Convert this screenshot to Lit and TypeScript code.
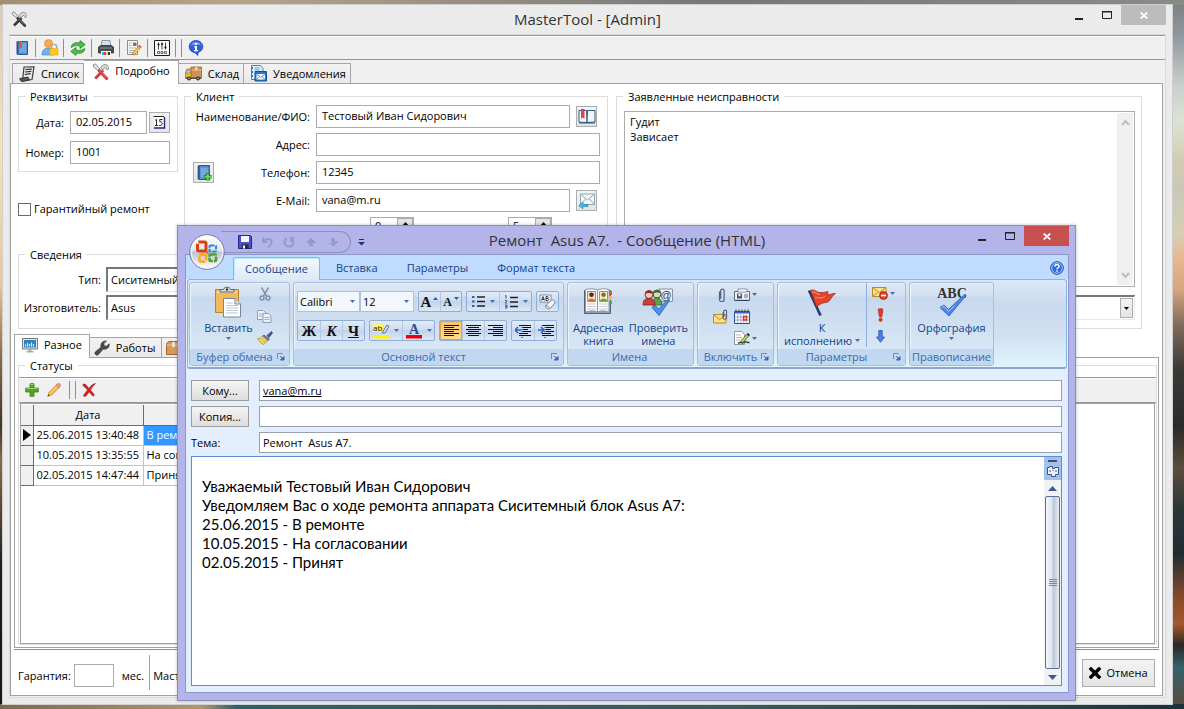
import { LitElement, html, svg, css, nothing, TemplateResult } from "lit";
import { customElement } from "lit/decorators.js";
import { classMap } from "lit/directives/class-map.js";

/* ---------- icons ---------- */

const pic = (w: number, h: number, body: unknown, vb = `0 0 ${w} ${h}`) =>
  html`<svg class="pic" width=${w} height=${h} viewBox=${vb} aria-hidden="true">${body}</svg>`;

const hammerArt = (handle: string) => svg`
  <path d="M3 14.5 10.5 7" stroke=${handle} stroke-width="2.6" fill="none"/>
  <path d="M8.2 4.2C9.6 1.6 12 .9 14 1.8c1.4.8 2 2.3 1.7 3.9l-1.6.9-.6-1.8-1.5-.5-2 2.6z" fill="#d5d9dc" stroke="#80868a" stroke-width=".8"/>
  <path d="M1.2 1.6 3.2.8l4.4 5 -1.7 1.6L1.4 3.6z" fill="#dfe2e4" stroke="#7d8387" stroke-width=".8"/>
  <path d="M6.8 7.2 13.8 14.6" stroke=${handle} stroke-width="2.8" stroke-linecap="round"/>
  <path d="M7.6 7.6 13.2 13.6" stroke="#fff" stroke-opacity=".35" stroke-width=".8"/>`;

const bookArt = svg`
  <path d="M2.5 1.5h2v13h-2z" fill="#28527f"/>
  <path d="M4 1.5h9.5v13H4z" fill="#5b93cf" stroke="#2b5a92"/>
  <path d="M5.5 3.5h6.500v9h-6.500z" fill="#7db0e2" opacity=".7"/>`;

const clipArt = svg`
  <path d="M5.500 4v8a2.300 2.300 0 0 0 4.600 0V3.300a1.700 1.700 0 0 0-3.400 0v8" transform="translate(-1 .5)" fill="none" stroke="#4f6283" stroke-width="1.200"/>`;

const icons: Record<string, () => TemplateResult> = {
  toolsDark: () => pic(16, 16, hammerArt("#3a3a3a")),
  toolsRed: () => pic(17, 17, hammerArt("#d23a3a"), "0 0 16 16"),
  bookmark: () => pic(16, 16, svg`${bookArt}<path d="M5 1h3v8L6.500 7.600 5 9z" fill="#e2504c"/>`),
  bookAdd: () => pic(17, 17, svg`${bookArt}
    <path d="M12 8.500v7M8.500 12h7" stroke="#14751b" stroke-width="3.200"/>
    <path d="M12 9v6M9 12h6" stroke="#5fdc55" stroke-width="1.800"/>`, "0 0 16 16"),
  userLock: () => pic(18, 17, svg`
    <circle cx="7.500" cy="4.500" r="4" fill="#f5a950" stroke="#db8a33" stroke-width=".6"/>
    <path d="M1 16c0-5 2.500-7 6-7s4 1 5 3v4z" fill="#6fb3ea" stroke="#3c83c4" stroke-width=".6"/>
    <path d="M10.500 9.500V8a2.600 2.600 0 0 1 5.200 0v1.500" fill="none" stroke="#a5abb2" stroke-width="1.400"/>
    <path d="M9 9.500h8V16H9z" fill="#ffc91f" stroke="#e09d10" stroke-width=".6"/>`),
  refresh: () => pic(16, 16, svg`
    <path d="M1.200 7.500C1.500 3.500 5 2 10 3V.6L15.200 4.600 10 8.500V6C7 5.200 4 5.500 1.200 7.500z" fill="#4fc04a" stroke="#1f8423" stroke-width=".8"/>
    <path d="M14.800 8.500c-.3 4-3.800 5.500-8.800 4.500v2.400L.8 11.400 6 7.500V10c3 .8 6 .5 8.800-1.500z" fill="#4fc04a" stroke="#1f8423" stroke-width=".8"/>`),
  printer: () => pic(16, 16, svg`
    <path d="M4 .5h8l1 6H3z" fill="#cfe1f2" stroke="#7b8894" stroke-width=".8"/>
    <path d="M.5 7 3 5.500h10L15.500 7v6H.5z" fill="#4a4e54" stroke="#2c2f33" stroke-width=".8"/>
    <path d="M2 8h12" stroke="#8b9198"/>
    <path d="M3 11h10v4.500H3z" fill="#fff"/>
    <path d="M4 12h2v3H4z" fill="#20b7e4"/><path d="M6 12h2v3H6z" fill="#e52c9c"/><path d="M8 12h2v3H8z" fill="#f7d72a"/><path d="M10 12h2v3h-2z" fill="#333"/>`),
  report: () => pic(16, 16, svg`
    <path d="M1.500.5h10v14h-10z" fill="#fafafa" stroke="#8e8e8e"/>
    <path d="M3 3h3M3 5.500h3M3 8h7M3 10.500h6M3 12.500h4" stroke="#b2b2b2"/>
    <path d="M7 2.500h3.500v3.500H7z" fill="#777"/>
    <path d="M7 14.500 14 6.500" stroke="#c4811d" stroke-width="3"/><path d="M7.500 14 13.500 7" stroke="#ffd75e" stroke-width="1.600"/>
    <path d="M12.800 5.400 15 7.400" stroke="#e75d5d" stroke-width="2"/>`),
  sliders: () => pic(16, 16, svg`
    <path d="M.5.500h15v15H.5z" fill="#fbfbfb" stroke="#1c1c1c"/>
    <path d="M4.500 2.500v7M8 2.500v7M11.500 2.500v7" stroke="#444"/>
    <path d="M3.500 4.500h2M7 4h2M10.500 7.500h2" stroke="#111" stroke-width="1.600"/>
    <path d="M3.500 11.500h2v2h-2zM7 11.500h2v2H7zM10.500 11.500h2v2h-2z" fill="none" stroke="#444" stroke-width=".8"/>`),
  info: () => pic(16, 16, svg`
    <path d="M8 .6c4 0 6.800 2.700 6.800 6 0 3-2 5-4.600 5.800L9.600 15.500 7 12.700C3.500 12.400 1.200 9.800 1.200 6.600 1.200 3.300 4 .6 8 .6z" fill="#2f5fe0" stroke="#1a3aa0" stroke-width=".7"/>
    <path d="M3 5C4 2.500 6 1.800 8 1.800S12 2.500 13 5z" fill="#8fb0ff" opacity=".7"/>
    <path d="M7 3h2v1.700H7zM6.200 6H9v4h1v1.200H6V10h1V7.200h-.8z" fill="#fff"/>`),
  list: () => pic(16, 16, svg`
    <path d="M5 1 15 .8 13 13.500 3.500 15z" fill="#e9e9e9" stroke="#3d3d3d" stroke-width="1.200"/>
    <path d="M.8 12.500 9 11l1.500 3-7 1.400C2 15.500.8 14.500.8 12.500z" fill="#555" stroke="#2b2b2b" stroke-width=".8"/>
    <path d="M6.500 3.500l6.300-.4M6 6l6.300-.6M5.700 8.500l6-.8" stroke="#2b2b2b" stroke-width="1.200"/>`),
  truck: () => pic(17, 15, svg`
    <path d="M6 1h10.500v10.500H6z" fill="#cf9154" stroke="#9a6431" stroke-width=".8"/>
    <path d="M6 4h10.500" stroke="#e5b98a"/><path d="M10.300 1h2v3.500h-2z" fill="#f3dcc0"/>
    <path d="M.5 12V6.500L2 3h4v9z" fill="#f5b81f" stroke="#a97a16" stroke-width=".8"/>
    <path d="M1.300 7 2.600 4H5v3z" fill="#bfe0f5" stroke="#55718a" stroke-width=".5"/>
    <path d="M.5 11.500h16v1.500H.5z" fill="#555"/>
    <circle cx="4" cy="12.500" r="2" fill="#333"/><circle cx="4" cy="12.500" r=".8" fill="#ccc"/>
    <circle cx="13" cy="12.500" r="2" fill="#333"/><circle cx="13" cy="12.500" r=".8" fill="#ccc"/>`),
  notices: () => pic(17, 17, svg`
    <path d="M1.500.5h9l2.500 3v11H1.500z" fill="#dff0fb" stroke="#3f84b8"/>
    <path d="M1 2h2v2H1zM1 6h2v2H1zM1 10h2v2H1z" fill="#2f7ab3"/><path d="M4.500 3h5M4.500 5h5" stroke="#6aa5cf"/>
    <path d="M5 6.500h11.500v9.500H5z" fill="#2a76cf" stroke="#164f9a"/>
    <path d="M6.500 9h8.500v5.500H6.500z" fill="#fff"/><path d="M6.500 9l4.200 3.300L15 9M6.500 14.500l3-2.700M15 14.500l-3-2.700" fill="none" stroke="#2a76cf" stroke-width=".8"/>`),
  calendar15: () => pic(13, 14, svg`
    <path d="M1 1h10v10H1z" fill="#fff"/><path d="M.5.500h10.500" stroke="#222"/>
    <path d="M11.500 1v11H1" fill="none" stroke="#1c2a86" stroke-width="1.400"/>
    <path d="M2 4.300 3.500 3.500v6M2 9.500h3M9.500 3.500H6.800v2.300c3.400-.4 3.200 3.700.2 3.700H6" fill="none" stroke="#111" stroke-width=".9"/>`),
  openBook: () => pic(18, 17, svg`
    <path d="M1 2.500h7.500L9 14.500 1 14z" fill="#fff" stroke="#2d597e"/><path d="M17 2.500H9.500L9 14.500l8-.5z" fill="#eef6fc" stroke="#2d597e"/>
    <path d="M1 15h16" stroke="#2d597e"/><path d="M3 1h3.500v10L4.800 9.500 3 11z" fill="#e04446"/>`),
  mailBack: () => pic(18, 17, svg`
    <path d="M2.500 2h14v10.500h-14z" fill="#f4fafc" stroke="#8da7b3"/><path d="M2.500 2l7 6 7-6M2.500 12.500l5-5.500M16.500 12.500l-5-5.500" fill="none" stroke="#8da7b3"/>
    <path d="M10 12.500H5V10L.8 13.800 5 16.800v-2.300h5z" fill="#54b6ea" stroke="#2485bf" stroke-width=".7"/>`),
  monitor: () => pic(16, 15, svg`
    <path d="M.5.500h15v10.500H.5z" fill="#e6e6e6" stroke="#777"/><path d="M2 2h12v7.500H2z" fill="#2d83bd"/>
    <path d="M3.500 8.500V6.500M5.500 8.500V5M7.500 8.500V6M9.500 8.500V4.500M11.500 8.500V6" stroke="#d8effa" stroke-width="1.200"/>
    <path d="M6.500 11h3v2h-3zM4.500 13h7v1.500h-7z" fill="#aaa"/>`),
  wrench: () => pic(16, 16, svg`
    <path d="M1.500 14.500c-1-1-.8-2 .2-3L7 7.200C6 3.500 8.800.4 12.500 1L9.800 3.600l.4 2.200 2.300.5L15.200 3.800c.6 3.500-2.400 6.200-6 5.300L4.500 14.500c-1 1-2 1-3 0z" fill="#4c4c4c" stroke="#2b2b2b" stroke-width=".6"/>`),
  box: () => pic(16, 14, svg`<path d="M.5 2.500 3 .5h12v13H.5z" fill="#d79a5c" stroke="#9d6833"/><path d="M.5 4h15" stroke="#efc89c"/><path d="M6 1h3v5H6z" fill="#f3dcc0"/>`),
  plus: () => pic(14, 14, svg`<path d="M5 .7h4V5h4.300v4H9v4.300H5V9H.7V5H5z" fill="#5aa02c" stroke="#3f7d18" stroke-width=".8"/><path d="M5.500 1.500h3M1.500 5.500h11" stroke="#9bd06c"/>`),
  pencil: () => pic(14, 14, svg`
    <path d="M.8 13.200 2 9.300 9.800 1.500l2.700 2.700L4.700 12z" fill="#f8b54b" stroke="#c47f1e" stroke-width=".7"/>
    <path d="M9.300 2 11 .5c1-.6 3 1 2.300 2.300L12 4.700z" fill="#f09a94" stroke="#bf625c" stroke-width=".6"/>
    <path d="M3 10.500 10 3.500" stroke="#ffe2a8"/><path d="M.6 13.400l.8-2 1.200 1.200z" fill="#222"/>`),
  cross: () => pic(14, 14, svg`<path d="M.5 2C1.500.5 3.500.8 4.500 2.500L7 5.500C9 2.500 10.500 1 13.500.5 11.500 2.500 9.500 4.800 8.500 7l4 5-1.500 1.300L7.200 9 3.500 13.500 1.300 13C3 10 4.300 8.500 5.500 7z" fill="#d5201f" stroke="#8e1413" stroke-width=".5"/>`),
  cancel: () => pic(12, 12, svg`<path d="M2 2l8 8M10 2 2 10" stroke="#000" stroke-width="3.400" stroke-linecap="square"/>`),

  office: () => pic(36, 36, svg`
    <defs><linearGradient id="orb" x1="0" y1="0" x2="0" y2="1"><stop offset="0" stop-color="#fff"/><stop offset=".45" stop-color="#e3e6f0"/><stop offset=".5" stop-color="#bcc4d6"/><stop offset="1" stop-color="#fdfdff"/></linearGradient></defs>
    <circle cx="18" cy="18" r="17.300" fill="url(#orb)" stroke="#77809b"/>
    <circle cx="18" cy="18" r="15.800" fill="none" stroke="#fff" stroke-opacity=".8"/>
    <rect x="8.500" y="8" width="8.500" height="9" rx="1.500" fill="none" stroke="#d9410b" stroke-width="3" stroke-dasharray="29 2 4"/>
    <rect x="20.500" y="11.500" width="6.500" height="6" rx="1" fill="none" stroke="#2f8ad4" stroke-width="2.200" stroke-dasharray="4 1"/>
    <rect x="10.500" y="20.500" width="6.500" height="7" rx="1.500" fill="none" stroke="#fbac16" stroke-width="2.600" stroke-dasharray="10 1"/>
    <rect x="20.500" y="20.500" width="6.500" height="6.500" rx="1" fill="none" stroke="#549f2c" stroke-width="2.600" stroke-dasharray="6 1"/>
    <path d="M17.500 17.500h2v2h-2z" fill="#e0401b"/>`),
  save: () => pic(14, 14, svg`
    <path d="M.5.500h12l1 1v12H.5z" fill="#4b50c4" stroke="#25298b"/><path d="M3 1h8v6H3z" fill="#f3f5fc"/>
    <path d="M4 9.500h6.500v4H4z" fill="#26292f"/><path d="M5 10.500h2v3H5z" fill="#fff"/>`),
  undo: () => pic(13, 12, svg`<path d="M2 1.500v4.500h4.500M2.500 5.500C6 1.500 11 2.500 10.500 6.500 10.300 8.500 9 10 7 11" fill="none" stroke="#959bc8" stroke-width="2"/>`),
  redo: () => pic(12, 12, svg`<path d="M3.500 2C-1 7 3 11 6.500 10.500 11 10 11.500 5 8.500 2.500M8 6V2h3.500" fill="none" stroke="#959bc8" stroke-width="2"/>`),
  up: () => pic(12, 11, svg`<path d="M6 1l5.500 5H8v3H4V6H.5z" fill="#959bc8"/>`),
  next: () => pic(12, 11, svg`<path d="M4 1h3l1 3h3.500L7 9.500 1.500 6H5z" fill="#959bc8"/>`),
  more: () => pic(7, 7, svg`<path d="M1 .5h5" stroke="#1f2f6b"/><path d="M0 3h7L3.500 6.500z" fill="#1f2f6b"/>`),
  help: () => pic(14, 14, svg`<circle cx="7" cy="7" r="6.300" fill="#2a6fe0" stroke="#2b4b8c"/><circle cx="7" cy="7" r="5.300" fill="none" stroke="#cfe0ff" stroke-width=".8"/>
    <path d="M5 5.500c0-2.600 4-2.400 4-.3C9 6.800 7 6.700 7 8.300M7 9.300v1.500" fill="none" stroke="#fff" stroke-width="1.500"/>`),
  paste: () => pic(28, 32, svg`
    <path d="M1.500 3.500h23v23h-23z" fill="#f1b95c" stroke="#bd822b"/><path d="M3 5h20v2H3z" fill="#f9d79a"/>
    <path d="M6 6V3.500h3.500C10 .5 16 .5 16.500 3.500H20V6z" fill="#d9dde2" stroke="#5e646b"/><circle cx="13" cy="3.500" r="1.200" fill="#333"/>
    <path d="M9.500 12.500h11.500l5.500 5.500v13h-17z" fill="#fff" stroke="#76879c"/><path d="M21 12.500v5.500h5.500" fill="#d6e2ee" stroke="#76879c"/>
    <path d="M12 17h7M12 19.500h12M12 22h12M12 24.500h12M12 27h12" stroke="#b9c7d8"/>`),
  cut: () => pic(12, 14, svg`<path d="M2.500.5 7.500 9M9.500.5 4.500 9" stroke="#8391a9" stroke-width="1.500"/>
    <circle cx="3" cy="11" r="2" fill="none" stroke="#7f8fae" stroke-width="1.400"/><circle cx="9" cy="11" r="2" fill="none" stroke="#7f8fae" stroke-width="1.400"/>`),
  copy: () => pic(15, 13, svg`<path d="M.5.500h6l2.500 2.500v6.500H.5z" fill="#eaf0f8" stroke="#8fa0bc"/><path d="M2 4h4M2 6h4" stroke="#a6b4cb"/>
    <path d="M6 3.500h5.500L14 6v6.500H6z" fill="#eaf0f8" stroke="#8fa0bc"/><path d="M7.500 7.500h5M7.500 9.500h5" stroke="#a6b4cb"/>`),
  brush: () => pic(16, 14, svg`<path d="M10 4.500 14.500.5l1 1.500L12 6.500z" fill="#5a4fa0" stroke="#2e2a63" stroke-width=".6"/>
    <path d="M7 4l5.500 4-2 2L5 5.500z" fill="#777c8c" stroke="#3c404d" stroke-width=".6"/><path d="M5.500 5 10.500 9.500 7 13.500C4 12.500 1.500 10 .5 7.500 3 7.500 4.500 6.500 5.500 5z" fill="#f4dc7c" stroke="#a38325" stroke-width=".7"/>
    <path d="M3 8l5 4M5 7l4 3.500" stroke="#b3932c" stroke-width=".6"/>`),
  bullets: () => pic(15, 13, svg`<path d="M6 2h8M6 6.500h8M6 11h8" stroke="#222" stroke-width="1.300"/><path d="M1 1h2.500v2H1zM1 5.500h2.500v2H1zM1 10h2.500v2H1z" fill="#2f5db0"/>`),
  numbers: () => pic(15, 14, svg`<path d="M6 2.500h8M6 7h8M6 11.500h8" stroke="#222" stroke-width="1.300"/>
    <path d="M1 1l1-.5v3M.8 5.500h2v1L1 8h2M1 10h2v1.500H1.500 3V13H1" fill="none" stroke="#2f5db0"/>`),
  clear: () => pic(17, 16, svg`<path d="M1 1h11v7H1z" fill="#fff" stroke="#5b77a6" stroke-width=".8"/>
    <path d="M2.500 6.500 4 2.500l1.500 4M3 5.500h2M7 2.500v4h1.500c1.500 0 1.500-2 0-2H7h1.300c1.200 0 1.200-2 0-2z" fill="none" stroke="#222" stroke-width=".9"/>
    <path d="M6.500 12l6-6c1-.8 4 1.200 3.500 3l-5 5.500c-1.500 1.200-5-.7-4.500-2.500z" fill="#f5f7fa" stroke="#5d6b80" stroke-width=".8"/><path d="M6.500 12c1.500-.5 4 1 4.500 2.500" fill="none" stroke="#5d6b80" stroke-width=".8"/>`),
  highlight: () => pic(17, 16, svg`<path d="M0 0h10v9H0z" fill="#fdf36a"/>
    <text x="0" y="8" font-size="8" font-family="Open Sans" fill="#111">ab</text>
    <path d="M9 10l5-8 2 1.500L12 10z" fill="#d6dde6" stroke="#4b5a72" stroke-width=".8"/><path d="M0 12h16v3.500H0z" fill="#fff500"/>`),
  fontColor: () => pic(17, 16, svg`<text x="3" y="10.500" font-size="14" font-weight="bold" font-family="Liberation Serif" fill="#2b4d93">А</text><path d="M0 12h16v3.500H0z" fill="#f00000"/>`),
  alignLeft: () => pic(15, 14, svg`<path d="M0 1.500h15M0 3.500h10M0 5.500h15M0 7.500h10M0 9.500h15M0 11.500h10" stroke="#111"/>`),
  alignCenter: () => pic(15, 14, svg`<path d="M0 1.500h15M2 3.500h11M0 5.500h15M2 7.500h11M0 9.500h15M2 11.500h11" stroke="#111"/>`),
  alignRight: () => pic(15, 14, svg`<path d="M0 1.500h15M5 3.500h10M0 5.500h15M5 7.500h10M0 9.500h15M5 11.500h10" stroke="#111"/>`),
  outdent: () => pic(16, 14, svg`<path d="M4 1.500h12M8 3.500h8M8 5.500h5M8 7.500h8M4 9.500h9M4 11.500h12" stroke="#111"/><path d="M7 1v13" stroke="#111" stroke-dasharray="1 1"/><path d="M0 6h6M3 3 0 6l3 3" fill="none" stroke="#2f62c0" stroke-width="1.500"/>`),
  indent: () => pic(16, 14, svg`<path d="M4 1.500h12M8 3.500h8M8 5.500h5M8 7.500h8M4 9.500h9M4 11.500h12" stroke="#111"/><path d="M7 1v13" stroke="#111" stroke-dasharray="1 1"/><path d="M0 6h6M3 3l3 3-3 3" fill="none" stroke="#2f62c0" stroke-width="1.500"/>`),
  addressBook: () => pic(30, 28, svg`
    <path d="M1.500 2.500h26v23h-26z" fill="#8d9bb3" stroke="#54637c"/>
    <path d="M2.500 1.500c4-1 9-1 12 .5v22c-3-1.500-8-1.500-12 0zM14.500 2c3-1.500 8-1.500 11.500-.5v22.500c-3.500-1.500-8.500-1.500-11.500 0z" fill="#fff" stroke="#8995a8"/>
    <path d="M26 3h3v4h-3z" fill="#e2503e"/><path d="M26 8h3v4h-3z" fill="#f1c232"/><path d="M26 13h3v3h-3z" fill="#5da840"/>
    <path d="M4.500 3.500h8v10h-8z" fill="#f9dfca" stroke="#777" stroke-width=".8"/><circle cx="8.500" cy="6.800" r="2.300" fill="#4a3324"/><path d="M5 13c0-3.500 7-3.500 7 0z" fill="#e06b28"/>
    <path d="M16.500 3.500h8v10h-8z" fill="#eef3cf" stroke="#777" stroke-width=".8"/><circle cx="20.500" cy="6.800" r="2.300" fill="#8d6a2b"/><path d="M17 13c0-3.500 7-3.500 7 0z" fill="#6fa32f"/>
    <path d="M4 16h9M4 18.500h9M4 21h9M16 16h9M16 18.500h9M16 21h9" stroke="#c3cbd7"/>`),
  checkNames: () => pic(32, 28, svg`
    <path d="M17 1h13.500v12.500H17z" fill="#eef2f8" stroke="#8793a8"/><text x="18.500" y="11" font-size="11" font-family="Liberation Sans" fill="#333">@</text>
    <circle cx="15" cy="6" r="4" fill="#d7ddb8" stroke="#3d5b34"/><path d="M11 5.500C12 1 18.500 1 19 5.500 16 4 13 4.500 11 5.500z" fill="#3f6a34"/>
    <path d="M10 17c0-5 2-7 5-7s5 2 5 7z" fill="#5fa052" stroke="#2f6426" stroke-width=".8"/>
    <circle cx="7" cy="6.500" r="4" fill="#f0c9b8" stroke="#7c2b22"/><path d="M3 6C3.500 1.500 10.500 1.500 11 6 8.500 5 5.500 4.500 3 6z" fill="#8d2f24"/>
    <path d="M1 17C1 11.500 3.500 10.500 7 10.500s6 1.500 6 6.500z" fill="#c9403a" stroke="#7c2320" stroke-width=".8"/>
    <path d="M10 19.500l3.500-2 3 3.500L26.500 11l1 1.500L17 27.500z" fill="#4c93ee" stroke="#1f56a8" stroke-width=".8"/>`),
  clip: () => pic(12, 15, clipArt),
  card: () => pic(16, 13, svg`<path d="M.5 3.500h15v9H.5z" fill="#eef1f6" stroke="#606c82"/><path d="M1 12.500h14" stroke="#39445a" stroke-width="1.400"/>
    <path d="M4 1h9v3H4z" fill="#fff" stroke="#606c82" stroke-width=".7"/><path d="M3 5.500h5v5H3z" fill="#4a566e"/><circle cx="5.500" cy="7" r="1.200" fill="#fff"/><path d="M10 7h4M10 9h4" stroke="#60708c"/>`),
  mailClip: () => pic(16, 15, svg`<path d="M.5 5.500h12.500v8.500H.5z" fill="#fbe08a" stroke="#b88c27"/><path d="M.5 5.500l6.200 5 6.300-5" fill="none" stroke="#b88c27"/>
    <path d="M10 3.500v5a1.800 1.800 0 0 0 3.600 0V2.500a1.400 1.400 0 0 0-2.800 0V8" fill="none" stroke="#4f6283" stroke-width="1.100"/>`),
  calendar: () => pic(16, 15, svg`<path d="M.5 2.500h15v12H.5z" fill="#fff" stroke="#2b4e9b"/><path d="M.5 2.500h15v2H.5z" fill="#3a63bd"/>
    <path d="M2 .5v2.500M5 .5v2.500M8 .5v2.500M11 .5v2.500M14 .5v2.500" stroke="#333"/><path d="M1 8h14M1 11h14M3.700 5v9M6.800 5v9M9.800 5v9M12.700 5v9" stroke="#7f99d6" stroke-width=".8"/><path d="M9.500 7.500h3v3.500h-3z" fill="none" stroke="#e5341d" stroke-width="1.400"/>`),
  sign: () => pic(16, 14, svg`<path d="M.5.500h7l3 3v10H.5z" fill="#fff" stroke="#8b98ab"/><path d="M2 4h5M2 6.500h6M2 9h4" stroke="#b2bdcc"/>
    <path d="M4 12.500c3-3 4 1 6-1s3 .5 5.500 0" fill="none" stroke="#2c4a35" stroke-width="1.400"/><path d="M6.500 10.500 13 3l2 1.500-6 7z" fill="#c5cf5a" stroke="#4a5f1b" stroke-width=".8"/><path d="M12.500 3.500 14 2l2 1.700-1.300 1.500z" fill="#333"/>`),
  flag: () => pic(30, 29, svg`<path d="M2 2.500 13.500 27.500" stroke="#213a72" stroke-width="2.600"/>
    <path d="M3.500 2.500C8 .5 9 4.500 13 4.500c4 .5 6-1 8-.8-.5 1.500 0 2.500 1 3.300 2-1 4-1.500 6.500-1.500-4 2-5 8.500-9.500 9-3 .3-4 .5-9.500 4z" fill="#e4442c" stroke="#a3271a" stroke-width=".8"/>
    <path d="M5 4c3-1 5 3 8 2.500M8 10c3-1 6 1 10-1.500" stroke="#f79a82" fill="none"/>`),
  permission: () => pic(16, 13, svg`<path d="M.5.500h13.500v9H.5z" fill="#fbe08a" stroke="#b88c27"/><path d="M.5.500l6.700 5.200L14 .5M.5 9.500l5-4" fill="none" stroke="#b88c27"/>
    <circle cx="11.500" cy="8.500" r="4" fill="#e03c25" stroke="#9e2414" stroke-width=".7"/><path d="M9 8.500h5" stroke="#fff" stroke-width="1.700"/>`),
  important: () => pic(7, 14, svg`<path d="M1 1.500C2 .3 5 .3 6 1.500L4.800 9H2.500z" fill="#e23c20" stroke="#a62411" stroke-width=".6"/><circle cx="3.600" cy="11.800" r="1.700" fill="#e23c20" stroke="#a62411" stroke-width=".6"/>`),
  low: () => pic(9, 13, svg`<path d="M2.800.5h3.400v6.500h2.300L4.500 12.300.5 7h2.300z" fill="#4b80e8" stroke="#2450ae" stroke-width=".8"/>`),
  spelling: () => pic(32, 30, svg`<text x="16" y="11" text-anchor="middle" font-size="14" font-weight="bold" font-family="Liberation Serif" fill="#333">ABC</text>
    <path d="M4 20.500l4-2.500 4.500 4.500L29 7l1 1.500L13 29z" fill="#4d86ea" stroke="#2c57ae" stroke-width=".8"/><path d="M5.500 20.500l2.500-1.300 4.500 5.300 6-6" fill="none" stroke="#a9c8fb"/>`),
  launcher: () => pic(8, 8, svg`<path d="M.5 6V.5H6" fill="none" stroke="#6a8cc0"/><path d="M3 3l3.500 3.500M7 3.500V7H3.500z" fill="#3f66a8" stroke="#3f66a8"/>`),
  select: () => pic(14, 12, svg`<path d="M1.500 2.500h2v-1h3v2h2v-1h4v7h-3v2h-4v-2h-4z" fill="#eef2fb" stroke="#43568c"/><path d="M4 5v2M7 5v1M10 5v2" stroke="#43568c"/>`),
};

const icon = (name: string) => icons[name]();
const arrow = html`<svg class="arrow" width="5" height="3" viewBox="0 0 5 3" aria-hidden="true"><path d="M0 0h5L2.500 3z" fill="currentColor"/></svg>`;

const windowButtons = html`
  <div class="win-buttons">
    <button class="win-min" aria-label="Свернуть"><svg width="8" height="12"><path d="M0 9h8v2H0z" fill="#222"/></svg></button>
    <button class="win-max" aria-label="Развернуть"><svg width="10" height="12"><path d="M.5 2.500h9v7h-9z" fill="none" stroke="#222"/><path d="M0 2h10v1.500H0z" fill="#222"/></svg></button>
    <button class="win-close" aria-label="Закрыть"><svg width="8" height="7"><path d="M.7.500l6.600 6M7.300.500l-6.600 6" stroke="#fff" stroke-width="1.700"/></svg></button>
  </div>`;

const base = css`
  *, *::before, *::after { box-sizing: border-box; }
  :host { font: 11px/16px "Open Sans", "Noto Sans", sans-serif; color: #000; }
  button, input, select, textarea { font: inherit; color: inherit; margin: 0; border-radius: 0; outline: none; }
  button { padding: 0; border: 0; background: none; display: flex; align-items: center; justify-content: center; }
  select { appearance: none; }
  svg { display: block; flex: none; }
  .title { margin: 0; padding-top: 4px; font-size: 15px; font-weight: 400; line-height: 20px; text-align: center; white-space: pre; color: #333; }
  .win-buttons { display: flex; align-items: flex-start; justify-content: flex-end; }
  .win-buttons button { height: 20px; width: 28px; }
  .win-buttons .win-close { width: 45px; }
`;

/* ---------- service desk window ---------- */

@customElement("service-window")
class ServiceWindow extends LitElement {
  static styles = [base, css`
    :host { display: flex; flex-direction: column; border: 1px solid #cdcfd0; background: #ebebeb; padding: 0 6px 6px; }
    .titlebar { display: grid; grid-template-columns: 120px 1fr 120px; height: 29px; flex: none; align-items: start; }
    .titlebar .pic { margin: 6px 0 0 2px; }
    .win-close { background: #bcbcbc; }
    .client { flex: 1; display: flex; flex-direction: column; border: 1px solid #d9d9d9; background: #f0f0f0; min-height: 0; }
    .toolbar { display: flex; align-items: center; height: 25px; flex: none; border-top: 1px solid #979797; border-bottom: 1px solid #979797; box-shadow: inset 0 1px #fff; padding-left: 3px; }
    .toolbar button { width: 18px; height: 18px; }
    .toolbar i { width: 1px; height: 18px; background: #8f8f8f; margin: 0 5px 0 4px; }
    .toolbar i + i { margin-left: 0; }
    .tabs { display: flex; align-items: flex-end; height: 23px; flex: none; padding-left: 2px; }
    .tabs button { height: 20px; gap: 6px; padding: 0 4px 0 6px; border: 1px solid #a5a5a5; border-bottom: 0; border-left-width: 0; background: linear-gradient(#f2f2f2, #e9e9e9); white-space: nowrap; }
    .tabs button:first-child { border-left-width: 1px; }
    .tabs button.on { height: 24px; margin-bottom: -1px; background: #fff; position: relative; padding: 0 8px 3px; }
    .page { flex: 1; display: flex; flex-direction: column; border: 1px solid #a0a0a0; background: #fff; margin: 0 2px 1px 0; padding: 5px 3px 0; min-height: 0; }
    fieldset { border: 1px solid #dcdcdc; margin: 0; padding: 0; min-width: 0; }
    legend { margin-left: 6px; padding: 0 5px; height: 14px; line-height: 16px; }
    label { white-space: nowrap; }
    .upper { display: flex; gap: 8px; margin: 0 17px 0 4px; }
    .left { width: 590px; flex: none; }
    .left-top { display: grid; grid-template-columns: 160px 1fr; gap: 6px; }
    .fields { display: grid; grid-template-columns: 45px auto 1fr; gap: 7px 6px; align-items: center; padding: 8px 0 7px; }
    .fields label { text-align: right; }
    .fields div { display: flex; gap: 2px; align-items: center; }
    .box { border: 1px solid #ababab; background: #fff; height: 23px; padding: 0 5px 2px; width: 100%; min-width: 0; }
    .date { width: 77px; }
    .number { width: 100px; }
    .push { border: 1px solid #adadad; background: linear-gradient(#f3f3f3, #e4e4e4); width: 21px; height: 21px; flex: none; }
    .check { display: flex; align-items: center; gap: 3px; margin-top: 29px; }
    .check input { appearance: none; width: 13px; height: 13px; border: 1px solid #6a6a6a; background: #fff; }
    .client-fields { display: flex; flex-direction: column; gap: 5px; padding: 2px 7px 6px 8px; }
    .line { display: grid; grid-template-columns: 21px 96px 1fr auto; align-items: center; height: 23px; }
    .line label { grid-column: 2; justify-self: end; }
    .line .box { grid-column: 3; margin-left: 6px; width: auto; }
    .line .slot { width: 30px; display: flex; justify-content: center; padding-left: 3px; }
    .line .first { grid-row: 1; grid-column: 1; }
    .spins { display: flex; grid-column: 3; gap: 94px; padding-left: 6px; margin-left: 54px; }
    .spin { display: flex; border: 1px solid #ababab; height: 23px; width: 44px; }
    .spin input { border: 0; width: 26px; padding: 0 4px 5px; flex: none; }
    .spin button { width: 16px; height: 11px; border: 1px solid #adadad; background: #e4e4e4; }
    .info { display: grid; grid-template-columns: 82px 1fr; gap: 3px 5px; padding: 6px 8px 8px 0; align-items: center; }
    .info label { text-align: right; }
    .combo { width: 100%; height: 25px; border: solid; border-width: 2px 1px 1px 2px; border-color: #777 #e8e8e8 #e8e8e8 #777; background: #fff; padding: 0 3px; display: block; }
    .faults { flex: 1; display: flex; flex-direction: column; }
    .faults-in { padding: 8px 6px 8px 7px; display: flex; flex-direction: column; gap: 8px; }
    .memo { display: flex; height: 176px; border: 1px solid #ababab; padding: 1px; }
    .memo textarea { flex: 1; border: 0; resize: none; overflow: hidden; padding: 1px 4px; line-height: 15px; background: #fff; }
    .bar { width: 16px; background: #f0f0f0; display: flex; flex-direction: column; justify-content: space-between; align-items: center; padding: 6px 0; }
    .drop { position: relative; }
    .drop .push { position: absolute; right: 2px; top: 3px; width: 13px; height: 20px; pointer-events: none; }
    .small { margin-top: 5px; padding-left: 0; }
    .small button { padding: 0 6px 0 4px; }
    .small button.on { padding: 0 7px 3px; }
    .sub { flex: 1; display: flex; border: 1px solid #a0a0a0; min-height: 0; padding: 0 1px 2px 3px; }
    .status { flex: 1; display: flex; flex-direction: column; }
    .status-in { display: flex; flex-direction: column; height: 100%; padding-top: 5px; }
    .status .toolbar { height: 26px; padding-left: 2px; background: #f0f0f0; }
    .status .toolbar button { width: 22px; }
    .status .toolbar button:last-child { width: 16px; }
    .grid { flex: 1; border: 1px solid #a0a0a0; margin: 0 1px; padding: 1px 0; overflow: hidden; }
    table { border-collapse: collapse; table-layout: fixed; width: 640px; }
    td, th { border: 1px solid #c3c3c3; padding: 0 3px; height: 20px; font-weight: 400; white-space: nowrap; overflow: hidden; text-align: left; }
    th { background: #f0f0f0; border-color: #6b6b6b; border-top: 0; text-align: center; }
    .mark { width: 12px; background: #f0f0f0; border-color: #6b6b6b; border-left: 0; padding: 0; }
    .when { width: 110px; }
    .sel { background: #3399ff; color: #fff; }
    .foot { display: flex; align-items: center; height: 46px; flex: none; margin-top: 1px; border-top: 1px solid #8d8d8d; padding: 6px 4px 0; }
    .foot .box { width: 40px; margin: 0 8px 0 3px; }
    .foot i { width: 1px; height: 35px; background: #a0a0a0; margin: 0 3px 6px 5px; }
    .foot .push { margin: 0 0 6px auto; width: 73px; height: 28px; gap: 5px; }
  `];

  private tools = ["bookmark", "|", "userLock", "|", "refresh", "|", "printer", "|", "report", "|", "sliders", "|", "|", "info"];
  private rows = [
    ["25.06.2015 13:40:48", "В ремонте"],
    ["10.05.2015 13:35:55", "На согласовании"],
    ["02.05.2015 14:47:44", "Принят"],
  ];

  private tool = (t: string) => (t === "|" ? html`<i></i>` : html`<button aria-label=${t}>${icon(t)}</button>`);

  private tab = (name: string, ic: string, on = false) =>
    html`<button role="tab" aria-selected=${on} class=${classMap({ on })}>${icon(ic)}<span>${name}</span></button>`;

  private spin = (id: string, value: string) => html`
    <span class="spin"><input id=${id} aria-label=${id} .value=${value}><button aria-label="Больше">
      <svg width="7" height="4"><path d="M0 4 3.500 0 7 4z"/></svg></button></span>`;

  render() {
    return html`
      <header class="titlebar">${icon("toolsDark")}<h1 class="title">MasterTool - [Admin]</h1>${windowButtons}</header>
      <div class="client">
        <div class="toolbar" role="toolbar">${this.tools.map(this.tool)}</div>
        <div class="tabs" role="tablist">
          ${this.tab("Список", "list")}${this.tab("Подробно", "toolsRed", true)}${this.tab("Склад", "truck")}${this.tab("Уведомления", "notices")}
        </div>
        <main class="page">
          <div class="upper">
            <div class="left">
              <div class="left-top">
                <div>
                  <fieldset>
                    <legend>Реквизиты</legend>
                    <div class="fields">
                      <label for="date">Дата:</label>
                      <div><input id="date" class="box date" .value=${"02.05.2015"}><button class="push" aria-label="Календарь">${icon("calendar15")}</button></div><span></span>
                      <label for="num">Номер:</label><input id="num" class="box number" .value=${"1001"}>
                    </div>
                  </fieldset>
                  <label class="check"><input type="checkbox">Гарантийный ремонт</label>
                </div>
                <fieldset>
                  <legend>Клиент</legend>
                  <div class="client-fields">
                    <div class="line"><label for="name">Наименование/ФИО:</label><input id="name" class="box" .value=${"Тестовый Иван Сидорович"}><span class="slot"><button class="push" aria-label="Выбрать клиента">${icon("openBook")}</button></span></div>
                    <div class="line"><label for="addr">Адрес:</label><input id="addr" class="box"></div>
                    <div class="line"><button class="push first" aria-label="Добавить">${icon("bookAdd")}</button><label for="tel">Телефон:</label><input id="tel" class="box" .value=${"12345"}></div>
                    <div class="line"><label for="mail">E-Mail:</label><input id="mail" class="box" .value=${"vana@m.ru"}><span class="slot"><button class="push" aria-label="Написать">${icon("mailBack")}</button></span></div>
                    <div class="line"><label for="Скидка">Скидка (%):</label><div class="spins">${this.spin("Скидка", "0")}${this.spin("Работы", "5")}</div></div>
                  </div>
                </fieldset>
              </div>
              <fieldset>
                <legend>Сведения</legend>
                <div class="info">
                  <label for="kind">Тип:</label><select id="kind" class="combo"><option>Сиситемный блок</option></select>
                  <label for="maker">Изготовитель:</label><select id="maker" class="combo"><option>Asus</option></select>
                </div>
              </fieldset>
            </div>
            <fieldset class="faults">
              <legend>Заявленные неисправности</legend>
              <div class="faults-in">
                <div class="memo">
                  <textarea aria-label="Заявленные неисправности" .value=${"Гудит\nЗависает"}></textarea>
                  <div class="bar">
                    <svg width="9" height="8"><path d="M1 6l3.500-4L8 6" fill="none" stroke="#bdbdbd" stroke-width="2"/></svg>
                    <svg width="9" height="8"><path d="M1 2l3.500 4L8 2" fill="none" stroke="#bdbdbd" stroke-width="2"/></svg>
                  </div>
                </div>
                <div class="drop"><select class="combo" aria-label="Неисправность"><option></option></select>
                  <span class="push"><svg width="13" height="18"><path d="M3 8h5L5.500 11z"/></svg></span></div>
              </div>
            </fieldset>
          </div>
          <div class="tabs small" role="tablist">${this.tab("Разное", "monitor", true)}${this.tab("Работы", "wrench")}${this.tab("Материалы", "box")}</div>
          <section class="sub">
            <fieldset class="status">
              <legend>Статусы</legend>
              <div class="status-in">
                <div class="toolbar" role="toolbar">${["plus", "pencil", "|", "|", "cross"].map(this.tool)}</div>
                <div class="grid">
                  <table>
                    <thead><tr><th class="mark"></th><th class="when">Дата</th><th>Статус</th></tr></thead>
                    <tbody>${this.rows.map(([when, what], i) => html`
                      <tr><td class="mark">${i ? nothing : html`<svg width="10" height="12"><path d="M2 0l8 6-8 6z"/></svg>`}</td>
                      <td class="when">${when}</td><td class=${classMap({ sel: !i })}>${what}</td></tr>`)}</tbody>
                  </table>
                </div>
              </div>
            </fieldset>
          </section>
          <footer class="foot">
            <label for="warranty">Гарантия:</label><input id="warranty" class="box"><span>мес.</span><i></i><span>Мастер:</span>
            <button class="push">${icon("cancel")}Отмена</button>
          </footer>
        </main>
      </div>`;
  }
}

/* ---------- mail window ---------- */

@customElement("mail-window")
class MailWindow extends LitElement {
  static styles = [base, css`
    :host { display: flex; flex-direction: column; border: 1px solid #8a8dba; background: #b2b4ea; padding: 0 6px 7px 7px; box-shadow: 0 0 3px rgba(0, 0, 0, .25); }
    .titlebar { display: grid; grid-template-columns: 200px 1fr 200px; height: 28px; flex: none; align-items: start; }
    .win-close { background: #c75050; }
    .quick { display: flex; align-items: center; padding: 5px 0 0 36px; }
    .pill { display: flex; align-items: center; height: 22px; border: 1px solid #8e91bb; border-left: 0; border-radius: 0 11px 11px 0; padding: 0 6px 0 13px; }
    .pill button { width: 22px; height: 20px; }
    .quick > button { width: 20px; height: 20px; }
    .orb { position: absolute; left: 11px; top: 8px; width: 36px; height: 36px; border-radius: 18px; z-index: 1; }
    .client { flex: 1; display: flex; flex-direction: column; min-height: 0; border: 1px solid #8b98cc; background: #e3efff; }
    .ribbon-top { display: flex; height: 24px; flex: none; background: #bfdbff; padding: 2px 4px 0 47px; align-items: stretch; gap: 3px; }
    .ribbon-top button { padding: 0 13px; color: #15428b; }
    .ribbon-top .on { padding: 0 11px; position: relative; border: 1px solid #8db2e3; border-bottom: 0; border-radius: 3px 3px 0 0; background: linear-gradient(#f4f9ff, #dce9f8); box-shadow: inset 1px 1px #b8f0fb; margin-bottom: -1px; }
    .ribbon-top .help { margin-left: auto; padding: 0; }
    .ribbon { display: flex; gap: 3px; padding: 2px 2px 1px 1px; margin: 0 1px; border: 1px solid #8db2e3; border-bottom: 2px solid #90a5d0; border-radius: 3px; background: linear-gradient(#dbe7f5, #c9d9ed 30%, #d0def0 60%, #dff4fd); height: 90px; flex: none; }
    .group { display: flex; flex-direction: column; flex: none; border: 1px solid #a7bdd9; border-radius: 3px; box-shadow: inset 1px 1px #ebf3fb; background: linear-gradient(#dee8f5, #d3e0f0 16%, #c7d8ed 17%, #d8e8f5 85%); color: #15428b; }
    .group .body { flex: 1; display: flex; justify-content: center; min-height: 0; }
    .group h2 { display: flex; flex: none; margin: 0; height: 16px; padding: 0 4px 0 2px; align-items: center; font-size: 11px; font-weight: 400; line-height: 16px; color: #3e6aaa; background: #c1d8f0; white-space: nowrap; }
    .group h2 span { flex: 1; text-align: center; }
    .arrow { color: #4b6eab; }
    .big { flex-direction: column; justify-content: flex-start; line-height: 13px; gap: 3px; text-align: center; padding-top: 3px; }
    .big .art { height: 32px; display: flex; align-items: center; }
    .more { display: flex; align-items: center; gap: 3px; }
    .clipboard { width: 101px; }
    .font { width: 271px; }
    .names { width: 127px; }
    .include { width: 77px; }
    .options { width: 129px; }
    .proof { width: 85px; }
    .group.proof h2 { padding: 0 1px; }
    .clipboard .body { gap: 4px; padding-right: 2px; }
    .names .body { gap: 5px; }
    .stack { display: flex; flex-direction: column; align-items: center; }
    .stack button { height: 22px; min-width: 16px; gap: 2px; }
    .font .body { flex-direction: column; justify-content: flex-start; padding: 8px 3px 0; gap: 8px; }
    .row { display: flex; gap: 4px; height: 21px; }
    .seg { display: flex; flex: none; border: 1px solid #8fadd6; border-radius: 2px; background: linear-gradient(#e3ecf8, #cddcf0 45%, #c2d4ec 50%, #dae8f6); color: #111; }
    .seg button { width: 22px; gap: 2px; border-left: 1px solid #b4c8e2; }
    .seg button:first-child { border-left: 0; }
    .tight .seg button { width: 21px; }
    .row .seg .wide { width: 32px; gap: 4px; }
    .seg .on { background: linear-gradient(#fbc069, #ffdf8f); box-shadow: inset 0 0 0 1px #e0a24c; }
    .serif { font: bold 15px/16px "Liberation Serif", serif; }
    .tiny { font-size: 12px; }
    .italic { font-style: italic; } .under { text-decoration: underline; }
    .pick { display: flex; align-items: center; flex: none; border: 1px solid #abc1de; background: #f2f7fd; width: 63px; padding-right: 4px; margin-right: -4px; color: #000; }
    .pick + .pick { width: 54px; margin-right: 0; }
    .pick select { flex: 1; min-width: 0; border: 0; background: none; padding: 0 2px; }
    .include .body { gap: 5px; padding-right: 2px; }
    .include .stack { align-items: flex-start; }
    .options .body { gap: 6px; padding-right: 4px; }
    .options .stack { border-left: 1px solid #8fb0dc; padding-left: 5px; align-items: flex-start; height: 64px; }
    .heads { display: grid; grid-template-columns: 58px 1fr; gap: 5px 10px; padding: 11px 6px 3px 5px; align-items: center; flex: none; }
    .heads button { height: 21px; border: 1px solid #9d9d9d; background: linear-gradient(#f4f4f4, #dedede); }
    .heads input { height: 21px; border: 1px solid #9aa0ab; padding: 0 3px; width: 100%; background: #fff; }
    .heads .linkish { text-decoration: underline; }
    .message { flex: 1; display: flex; margin: 0 6px 6px 5px; border: 1px solid #5b8fd4; background: #fff; min-height: 0; }
    .text { flex: 1; padding: 20px 10px; font: 15px/19px Lato, "Open Sans", sans-serif; }
    .text p { margin: 0; }
    .scroll { width: 17px; display: flex; flex-direction: column; background: #f2f2f2; flex: none; }
    .scroll button { height: 16px; }
    .scroll .top { height: 23px; background: #a3c1ec; flex-direction: column; gap: 3px; }
    .thumb { flex: 1; margin: 0 1px; border: 1px solid #5b6f9c; border-radius: 2px; background: linear-gradient(90deg, #f5f7fa, #dfe6ee 45%, #b9c8da 55%, #e4ebf2); display: flex; align-items: center; justify-content: center; }
  `];

  private group = (cls: string, title: string, body: unknown, launcher = true) => html`
    <section class="group ${cls}"><div class="body">${body}</div>
      <h2><span>${title}</span>${launcher ? icon("launcher") : nothing}</h2></section>`;

  private big = (ic: string, text: unknown) => html`<button class="big"><span class="art">${icon(ic)}</span>${text}</button>`;
  private small = (ic: string, more = false) => html`<button aria-label=${ic}>${icon(ic)}${more ? arrow : nothing}</button>`;
  private wide = (ic: string) => html`<button class="wide" aria-label=${ic}>${icon(ic)}${arrow}</button>`;

  render() {
    return html`
      <button class="orb" aria-label="Office">${icon("office")}</button>
      <header class="titlebar">
        <div class="quick"><div class="pill">${["save", "undo", "redo", "up", "next"].map((n) => this.small(n))}</div>${this.small("more")}</div>
        <h1 class="title">Ремонт  Asus A7.  - Сообщение (HTML)</h1>
        ${windowButtons}
      </header>
      <div class="client">
        <nav class="ribbon-top">
          <button class="on">Сообщение</button><button>Вставка</button><button>Параметры</button><button>Формат текста</button>
          <button class="help" aria-label="Справка">${icon("help")}</button>
        </nav>
        <div class="ribbon">
          ${this.group("clipboard", "Буфер обмена", html`
            ${this.big("paste", html`Вставить${arrow}`)}
            <div class="stack">${["cut", "copy", "brush"].map((n) => this.small(n))}</div>`)}
          ${this.group("font", "Основной текст", html`
            <div class="row tight">
              <span class="pick"><select aria-label="Шрифт"><option>Calibri</option></select>${arrow}</span>
              <span class="pick"><select aria-label="Размер"><option>12</option></select>${arrow}</span>
              <span class="seg"><button class="serif">A<svg width="5" height="10"><path d="M0 3h5L2.500 0z" fill="#2f5db0"/></svg></button><button class="serif tiny">A<svg width="5" height="10"><path d="M0 0h5L2.500 3z" fill="#2f5db0"/></svg></button></span>
              <span class="seg">${this.wide("bullets")}${this.wide("numbers")}</span>
              <span class="seg">${this.small("clear")}</span>
            </div>
            <div class="row">
              <span class="seg"><button class="serif">Ж</button><button class="serif italic">К</button><button class="serif under">Ч</button></span>
              <span class="seg">${this.wide("highlight")}${this.wide("fontColor")}</span>
              <span class="seg"><button class="on" aria-label="По левому краю">${icon("alignLeft")}</button>${this.small("alignCenter")}${this.small("alignRight")}</span>
              <span class="seg">${this.small("outdent")}${this.small("indent")}</span>
            </div>`)}
          ${this.group("names", "Имена", html`
            ${this.big("addressBook", html`<span>Адресная<br>книга</span>`)}${this.big("checkNames", html`<span>Проверить<br>имена</span>`)}`, false)}
          ${this.group("include", "Включить", html`
            <div class="stack">${this.small("clip")}${this.small("mailClip")}</div>
            <div class="stack">${this.small("card", true)}${this.small("calendar")}${this.small("sign", true)}</div>`)}
          ${this.group("options", "Параметры", html`
            <button class="big"><span class="art">${icon("flag")}</span><span>К<span class="more">исполнению${arrow}</span></span></button>
            <div class="stack">${this.small("permission", true)}${this.small("important")}${this.small("low")}</div>`)}
          ${this.group("proof", "Правописание", this.big("spelling", html`Орфография${arrow}`), false)}
        </div>
        <div class="heads">
          <button>Кому...</button><input class="linkish" aria-label="Кому" .value=${"vana@m.ru"}>
          <button>Копия...</button><input aria-label="Копия">
          <label for="subject">Тема:</label><input id="subject" .value=${"Ремонт  Asus A7."}>
        </div>
        <div class="message">
          <div class="text">
            <p>Уважаемый Тестовый Иван Сидорович</p>
            <p>Уведомляем Вас о ходе ремонта аппарата Сиситемный блок Asus A7:</p>
            <p>25.06.2015 - В ремонте</p>
            <p>10.05.2015 - На согласовании</p>
            <p>02.05.2015 - Принят</p>
          </div>
          <div class="scroll">
            <button class="top" aria-label="Объект"><svg width="9" height="2"><path d="M0 0h9v2H0z" fill="#43506e"/></svg>${icon("select")}</button>
            <button aria-label="Вверх"><svg width="9" height="5"><path d="M0 5 4.500 0 9 5z" fill="#43568c"/></svg></button>
            <div class="thumb"><svg width="8" height="8"><path d="M0 .5h8M0 2.500h8M0 4.500h8M0 6.500h8" stroke="#7a8699"/></svg></div>
            <button aria-label="Вниз"><svg width="9" height="5"><path d="M0 0h9L4.500 5z" fill="#43568c"/></svg></button>
          </div>
        </div>
      </div>`;
  }
}

@customElement("app-root")
class AppRoot extends LitElement {
  static styles = css`
    :host { display: block; position: relative; min-height: 100vh; overflow: hidden;
      background:
        linear-gradient(90deg, #a58d70, #b7a488 20%, #77777a 60%, #8a8a86) top / 100% 5px no-repeat,
        linear-gradient(90deg, #7d6a4d, #b3956b 17%, #2f6067 20%, #3b5a62 60%, #26414a 90%, #1c3038) bottom / 100% 5px no-repeat,
        linear-gradient(#d8cbb0, #f3e6b5 20%, #e9c79a 40%, #8d6d4a 50%, #40362a 60%, #8a6b45 65%, #1f1e1c 80%, #15181a) left / 4px 100% no-repeat,
        linear-gradient(#7c7e80, #8f989f 5%, #c9cfcb 12%, #dbe3d5 17%, #d3cbb0 23%, #c7c8bb 27%, #d9cfb2 33%, #e8b48f 37%, #d4a37f 41%, #7d6a5b 46%, #3c3a37 52%, #2b2a29 60%, #5c4d3d 66%, #2a3538 72%, #1f2d33 78%, #84482a 84%, #a35a2e 88%, #2b2623 91%, #35616c 94%, #5a4a3a) right / 12px 100% no-repeat; }
    service-window { position: absolute; inset: 4px 11px 4px 2px; }
    mail-window { position: absolute; inset: 225px 108px 8px 177px; }
  `;
  render() {
    return html`<service-window></service-window><mail-window></mail-window>`;
  }
}
